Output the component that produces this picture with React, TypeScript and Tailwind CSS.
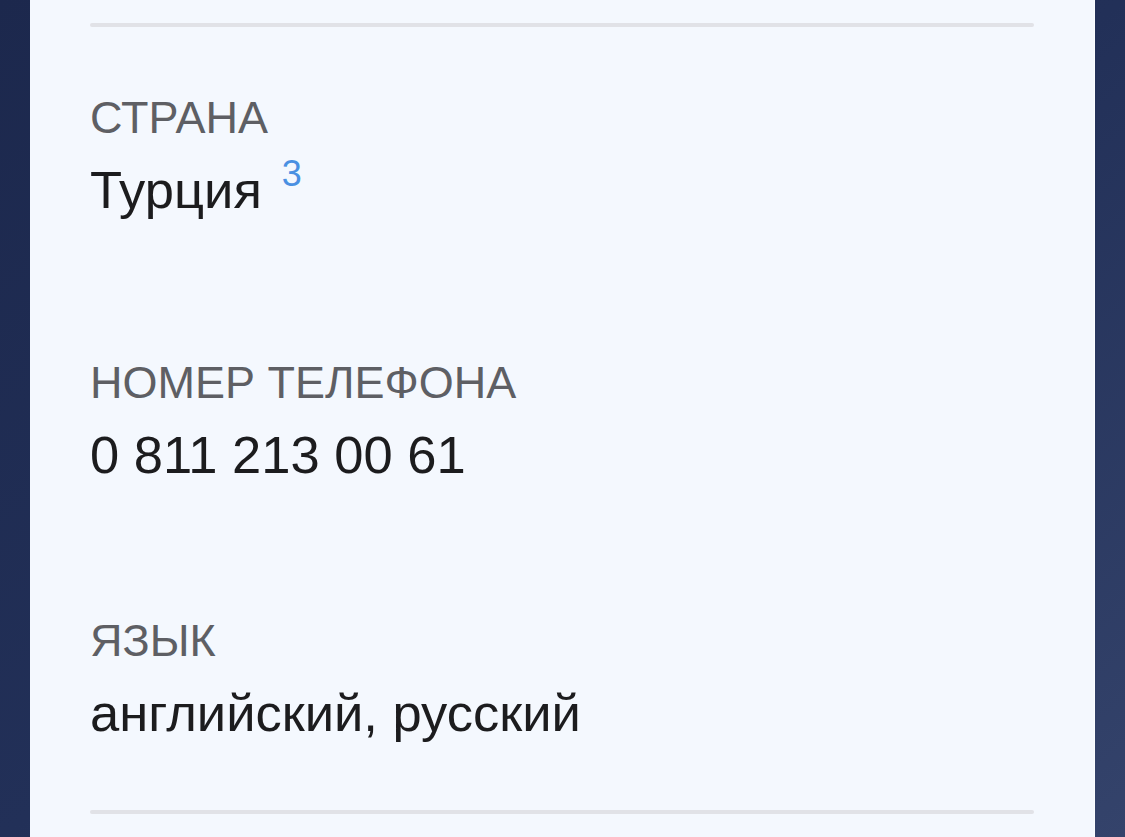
import React from "react";

interface Field {
  label: string;
  value: string;
  note?: string;
  gap: string;
}

const fields: Field[] = [
  { label: "Страна", value: "Турция", note: "3", gap: "mt-[63px]" },
  { label: "Номер телефона", value: "0 811 213 00 61", gap: "mt-[133px]" },
  { label: "Язык", value: "английский, русский", gap: "mt-[126px]" },
];

const App: React.FC = () => {
  return (
    <div
      className="w-full h-[837px] overflow-hidden flex px-[30px] bg-gradient-to-br from-[#1c284d] via-[#223058] to-[#34436b]"
      style={{ fontFamily: '"Liberation Sans", Arial, sans-serif' }}
    >
      <div className="flex-1 bg-[#f4f8fe] px-[60px] border-r border-[#fbfdff]">
        <div className="mt-[23px] h-[4px] rounded-full bg-[#e1e2e7]" />

        {fields.map((f) => (
          <div key={f.label} className={f.gap}>
            <div className="text-[45px] leading-[56px] uppercase text-[#5e5f64]">
              {f.label}
            </div>
            <div className="mt-[12px] text-[52.5px] leading-[64px] text-[#1c1c1e] whitespace-nowrap">
              {f.value}
              {f.note && (
                <span className="ml-[20px] text-[36px] leading-[20px] align-[22px] text-[#4a90e2]">
                  {f.note}
                </span>
              )}
            </div>
          </div>
        ))}

        <div className="mt-[65px] h-[4px] rounded-full bg-[#e1e2e7]" />
      </div>
    </div>
  );
};

export default App;
